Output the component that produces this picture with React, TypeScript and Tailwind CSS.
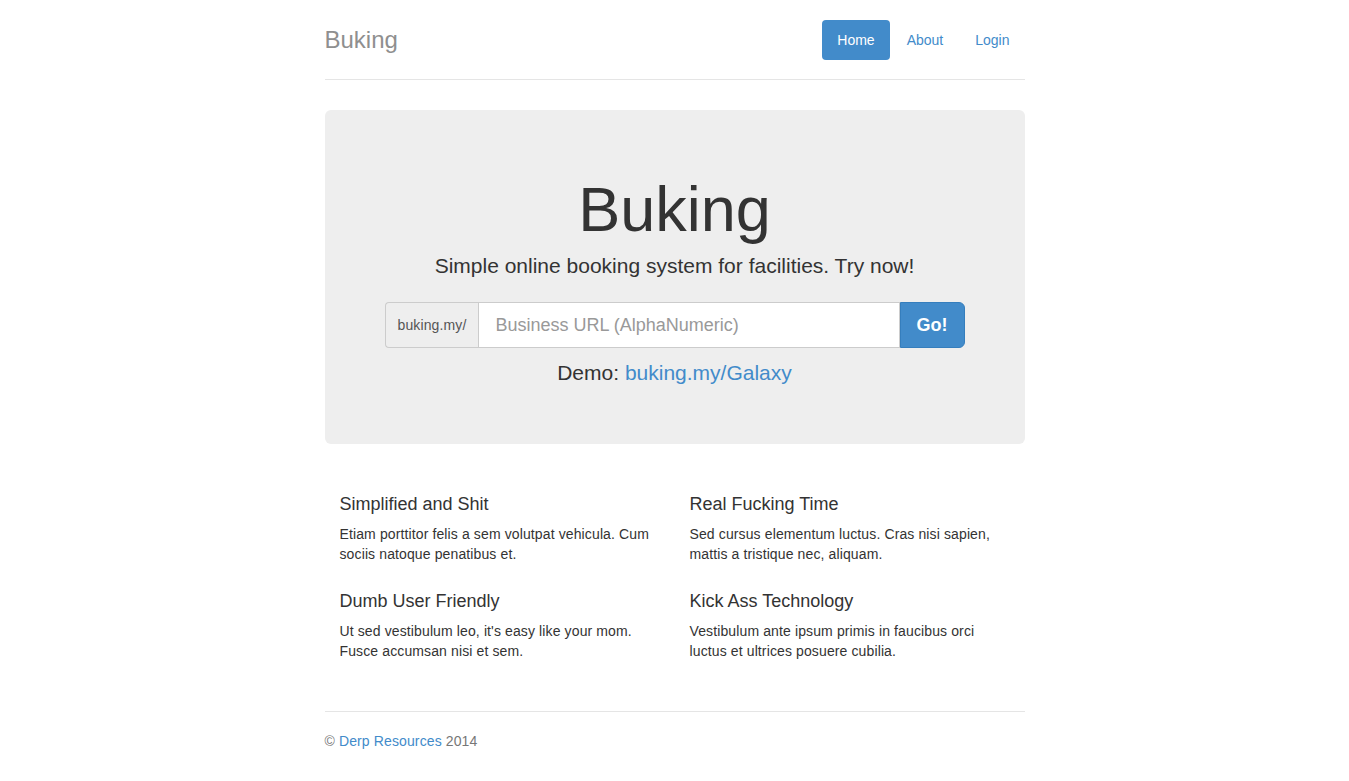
import React from "react";

const features = [
  [
    { t: "Simplified and Shit", d: "Etiam porttitor felis a sem volutpat vehicula. Cum sociis natoque penatibus et." },
    { t: "Dumb User Friendly", d: "Ut sed vestibulum leo, it's easy like your mom. Fusce accumsan nisi et sem." },
  ],
  [
    { t: "Real Fucking Time", d: "Sed cursus elementum luctus. Cras nisi sapien, mattis a tristique nec, aliquam." },
    { t: "Kick Ass Technology", d: "Vestibulum ante ipsum primis in faucibus orci luctus et ultrices posuere cubilia." },
  ],
];

export default function App() {
  return (
    <div
      className="min-h-screen bg-white text-[#333] text-[14px] leading-[20px]"
      style={{ fontFamily: '"Liberation Sans", Arial, Helvetica, sans-serif' }}
    >
      <div className="mx-auto w-[730px] px-[15px]">
        {/* Header */}
        <div className="flex items-center justify-between pt-[20px] pb-[19px] border-b border-[#e5e5e5] mb-[30px]">
          <h3 className="text-[24px] leading-[40px] text-[#8f8f8f] font-normal">Buking</h3>
          <ul className="flex gap-[2px]">
            <li>
              <a className="block rounded-[4px] bg-[#428bca] px-[15px] py-[10px] text-white">Home</a>
            </li>
            <li>
              <a className="block rounded-[4px] px-[15px] py-[10px] text-[#428bca]">About</a>
            </li>
            <li>
              <a className="block rounded-[4px] px-[15px] py-[10px] text-[#428bca]">Login</a>
            </li>
          </ul>
        </div>

        {/* Jumbotron */}
        <div className="rounded-[6px] bg-[#eeeeee] px-[60px] pt-[48px] pb-[56px] text-center">
          <h1 className="mt-[17px] mb-[7px] text-[63px] leading-[69px] font-normal text-[#333]">Buking</h1>
          <p className="mb-[21px] text-[21px] leading-[30px]">Simple online booking system for facilities. Try now!</p>
          <div className="flex h-[46px] w-full">
            <span className="flex items-center rounded-l-[4px] border border-r-0 border-[#ccc] bg-[#eee] px-[12px] text-[14px] tracking-[0.12px] text-[#555]">
              buking.my/
            </span>
            <input
              className="min-w-0 flex-1 border border-[#ccc] bg-white px-[16px] text-[18px] text-[#555] placeholder:text-[#999] outline-none"
              placeholder="Business URL (AlphaNumeric)"
            />
            <button className="rounded-r-[6px] border border-[#357ebd] bg-[#428bca] px-[16px] text-[18px] font-bold text-white">
              Go!
            </button>
          </div>
          <p className="mt-[10px] text-[21px] leading-[30px]">
            Demo: <a className="text-[#428bca]">buking.my/Galaxy</a>
          </p>
        </div>

        {/* Marketing */}
        <div className="mt-[40px] mb-[50px] flex">
          {features.map((col, i) => (
            <div key={i} className="w-1/2 px-[15px]">
              {col.map((f, j) => (
                <div key={j} className={j > 0 ? "mt-[27px]" : ""}>
                  <h4 className="mt-[10px] mb-[10px] text-[18px] leading-[20px] font-normal">{f.t}</h4>
                  <p className="tracking-[0.12px]">{f.d}</p>
                </div>
              ))}
            </div>
          ))}
        </div>

        {/* Footer */}
        <div className="border-t border-[#e5e5e5] pt-[19px] pb-[20px] text-[#777] tracking-[0.12px]">
          <p>
            © <a className="text-[#428bca]">Derp Resources</a> 2014
          </p>
        </div>
      </div>
    </div>
  );
}
